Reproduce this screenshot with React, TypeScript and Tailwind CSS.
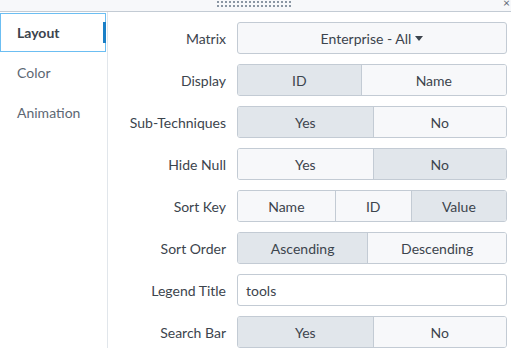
import React from "react";

const font = { fontFamily: "Lato, 'Open Sans', sans-serif" };

type SegProps = { options: string[]; selected: number };

const Segmented = ({ options, selected }: SegProps) => (
  <div className="flex h-8 w-full overflow-hidden rounded-[3px] border border-[#c3cbd4]">
    {options.map((o, i) => (
      <div
        key={o}
        className={`flex flex-auto items-center justify-center px-2 text-[14px] text-[#3c444d] ${
          i > 0 ? "border-l border-[#c3cbd4]" : ""
        } ${i === selected ? "bg-[#e1e6eb]" : "bg-[#f7f8fa]"}`}
      >
        {o}
      </div>
    ))}
  </div>
);

const Row = ({ label, children }: { label: string; children: React.ReactNode }) => (
  <div className="flex h-8 items-center">
    <div className="w-[129px] pr-[11px] text-right text-[14px] text-[#3c444d]">{label}</div>
    <div className="flex-1">{children}</div>
  </div>
);

export default function App() {
  return (
    <div className="h-[357px] w-[511px] overflow-hidden bg-white" style={font}>
      <div className="relative h-[12px] border-b border-[#c3cbd4] bg-[#f7f8fa]">
        <div className="absolute left-[217px] top-[1px] grid grid-cols-[repeat(19,4px)] gap-y-[2px]">
          {Array.from({ length: 38 }).map((_, i) => (
            <div key={i} className="h-[2px] w-[2px] bg-[#8a96a3]" />
          ))}
        </div>
        <div className="absolute right-[1px] top-[-3px] text-[12px] leading-none text-[#5c6773]">×</div>
      </div>
      <div className="flex">
        <div className="w-[108px] shrink-0 border-r border-[#e1e6eb] pt-[1px]">
          <div className="relative flex h-[39px] w-[106px] items-center border border-[#6cbef2] pl-[16px] text-[14px] font-bold text-[#3c444d]">
            Layout
            <div className="absolute right-[-1px] top-[8px] h-[21px] w-[3px] bg-[#1a7fc7]" />
          </div>
          <div className="flex h-[40px] items-center pl-[17px] text-[14px] text-[#5c6773]">Color</div>
          <div className="flex h-[40px] items-center pl-[17px] text-[14px] text-[#5c6773]">Animation</div>
        </div>
        <div className="flex flex-1 flex-col gap-[10px] pr-[4px] pt-[10px]">
          <Row label="Matrix">
            <div className="flex h-8 items-center justify-center gap-1 rounded-[3px] border border-[#c3cbd4] bg-[#f7f8fa] text-[14px] text-[#3c444d]">
              Enterprise - All
              <svg width="8" height="5" viewBox="0 0 8 5">
                <path d="M0 0h8L4 5z" fill="#3c444d" />
              </svg>
            </div>
          </Row>
          <Row label="Display">
            <Segmented options={["ID", "Name"]} selected={0} />
          </Row>
          <Row label="Sub-Techniques">
            <Segmented options={["Yes", "No"]} selected={0} />
          </Row>
          <Row label="Hide Null">
            <Segmented options={["Yes", "No"]} selected={1} />
          </Row>
          <Row label="Sort Key">
            <Segmented options={["Name", "ID", "Value"]} selected={2} />
          </Row>
          <Row label="Sort Order">
            <Segmented options={["Ascending", "Descending"]} selected={0} />
          </Row>
          <Row label="Legend Title">
            <div className="flex h-8 items-center rounded-[3px] border border-[#c3cbd4] bg-white pl-[8px] text-[14px] text-[#3c444d]">
              tools
            </div>
          </Row>
          <Row label="Search Bar">
            <Segmented options={["Yes", "No"]} selected={0} />
          </Row>
        </div>
      </div>
    </div>
  );
}
